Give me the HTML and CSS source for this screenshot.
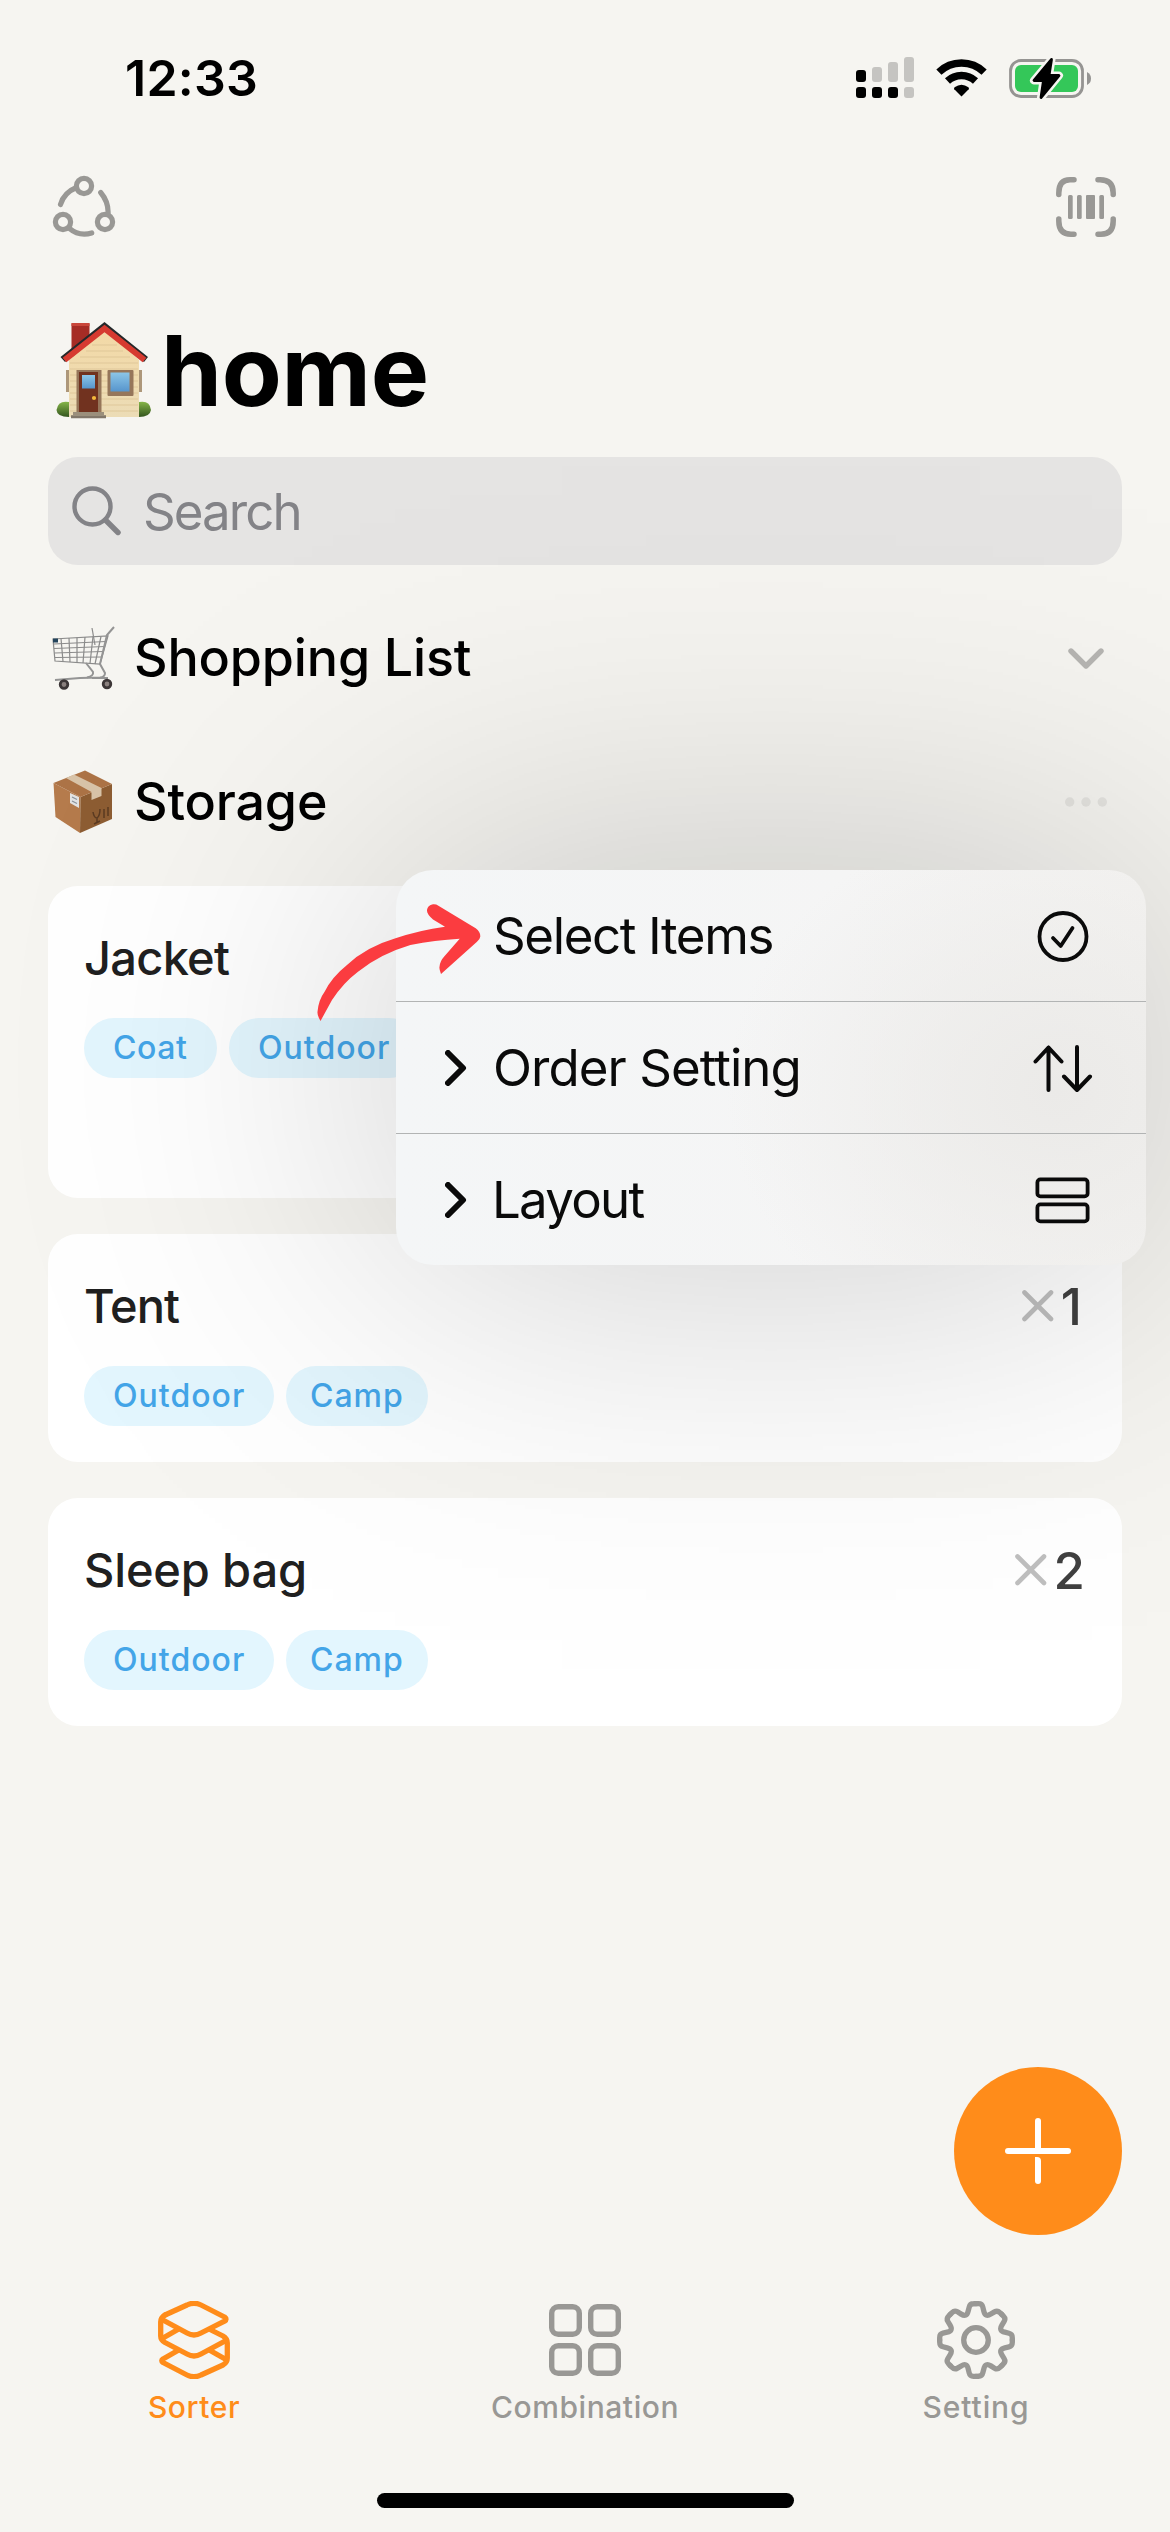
FILE: index.html
```html
<!DOCTYPE html>
<html lang="en">
<head>
<meta charset="utf-8">
<title>home</title>
<link rel="stylesheet" href="styles.css">
</head>
<body>
<div class="screen">
  <header class="status">
    <span class="time">12:33</span>
    <div class="status-icons">
      <svg width="58" height="42" viewBox="0 0 58 42">
        <g fill="#000"><rect y="13" width="10" height="12" rx="3"/><rect y="30" width="10" height="11" rx="3"/><rect x="16" y="30" width="10" height="11" rx="3"/><rect x="32" y="30" width="10" height="11" rx="3"/></g>
        <g fill="#c5c4c1"><rect x="16" y="10" width="10" height="15" rx="3"/><rect x="32" y="5" width="10" height="20" rx="3"/><rect x="48" width="10" height="25" rx="3"/><rect x="48" y="30" width="10" height="11" rx="3"/></g>
      </svg>
      <svg class="wifi" width="52" height="38" viewBox="0 0 52 38">
        <g fill="none" stroke="#000" stroke-width="7.400"><path d="M2.900 13.100A32.500 32.500 0 0 1 48.100 13.100"/><path d="M11.500 22A20.500 20.500 0 0 1 39.500 22"/></g>
        <path d="M25.500 37.500L18.300 30.300Q17.500 29.200 18.600 28.300Q25.500 23.200 32.400 28.300Q33.500 29.200 32.700 30.300Z"/>
      </svg>
      <svg class="battery" width="84" height="44" viewBox="0 0 84 44">
        <rect x="1.500" y="4.500" width="72" height="36" rx="10.500" fill="none" stroke="#959492" stroke-width="2.800"/>
        <rect x="6" y="9" width="63" height="27" rx="6" fill="#34c759"/>
        <path d="M78 16Q82 18 82 22.500T78 29Z" fill="#959492"/>
        <path d="M42.500 3.500L25 24.500H34.500L32 41.500L50 19.500H40Z" fill="#f6f5f1" stroke="#f6f5f1" stroke-width="8" stroke-linejoin="round"/>
        <path d="M42.500 3.500L25 24.500H34.500L32 41.500L50 19.500H40Z" stroke="#000" stroke-width="2.800" stroke-linejoin="round"/>
      </svg>
    </div>
  </header>

  <nav class="toolbar">
    <svg width="64" height="64" viewBox="0 0 64 64" fill="none" stroke="#999895" stroke-width="5.200" stroke-linecap="round">
      <circle cx="32" cy="11" r="7.600"/><circle cx="11" cy="47" r="7.600"/><circle cx="53" cy="47" r="7.600"/>
      <path d="M24.500 12.500Q12 17.500 8.500 29.500M48.700 17.500Q57 27.500 56 39.500M17.500 53.500Q27 61.500 39.700 58"/>
    </svg>
    <svg width="60" height="60" viewBox="0 0 60 60" fill="#999895">
      <path d="M2.800 17.500V16Q2.800 2.800 14 2.800H18M42 2.800H44Q57.200 2.800 57.200 16V17.500M57.200 42V44Q57.200 57.200 45 57.200H42M18 57.200H15Q2.800 57.200 2.800 44V42" fill="none" stroke="#999895" stroke-width="5.500" stroke-linecap="round"/>
      <rect x="12" y="18" width="4.700" height="24" rx="1.500"/><rect x="21" y="18" width="4.700" height="24" rx="1.500"/><rect x="30" y="18" width="9" height="24" rx="1"/><rect x="43.300" y="18" width="4.700" height="24" rx="1.500"/>
    </svg>
  </nav>

  <main class="content">
    <h1 class="title">
      <svg width="104" height="104" viewBox="12 8 104 104">
        <defs>
          <linearGradient id="wall" x1="0" y1="0" x2="0" y2="1"><stop offset="0" stop-color="#f3d9a6"/><stop offset="1" stop-color="#ecdcb6"/></linearGradient>
          <linearGradient id="glass" x1="0" y1="0" x2="0" y2="1"><stop offset="0" stop-color="#8cc6e8"/><stop offset="1" stop-color="#5795cc"/></linearGradient>
          <linearGradient id="bush" x1="0" y1="0" x2="0" y2="1"><stop offset="0" stop-color="#86b649"/><stop offset="1" stop-color="#33551e"/></linearGradient>
        </defs>
        <rect x="31.500" y="13" width="18" height="34" rx="1" fill="#a62c25"/><path d="M31.500 14.500h18" stroke="#c9463a" stroke-width="3"/>
        <path d="M27.500 60v22M100.500 60v22" stroke="#ad977a" stroke-width="3"/>
        <path d="M29 50L64.500 19L99 50V107H29Z" fill="url(#wall)"/>
        <path d="M52 35H77M46 41H83M40 47H90M30 53H98M30 59H98M30 65H98M30 71H98M30 77H98M30 83H98M30 89H98M30 95H98M30 101H98" stroke="#dcc394" stroke-width=".8"/>
        <path d="M20.500 47L64.500 12L108 47L104 52L64.500 20L25 52Z" fill="#25282a"/>
        <path d="M24.500 50L64.500 18.500L104.500 50" fill="none" stroke="#d63a30" stroke-width="6"/>
        <rect x="36.500" y="60" width="25" height="44" fill="#96765a"/><rect x="39" y="62" width="19" height="41" fill="#71321f"/><rect x="42" y="65" width="13" height="13.500" fill="url(#glass)"/><circle cx="54" cy="88" r="2.100" fill="#f5b93b"/>
        <rect x="67.500" y="60" width="26" height="26" rx="1" fill="#96765a"/><rect x="70.500" y="62.500" width="19" height="19" fill="url(#glass)"/>
        <path d="M29 92Q18 90 16.500 100Q17 107 29 107Z" fill="url(#bush)"/><path d="M99 92Q110 90 111 100Q110 107 99 107Z" fill="url(#bush)"/>
        <path d="M33 103.500H64" stroke="#9b8f7c" stroke-width="3"/><path d="M31 106.800H66" stroke="#81776a" stroke-width="3"/>
      </svg>
      <span>home</span>
    </h1>

    <div class="search">
      <svg width="50" height="50" viewBox="0 0 50 50" fill="none" stroke="#838387"><circle cx="20.500" cy="20.500" r="18" stroke-width="4.400"/><path d="M33.500 34L46 46.500" stroke-width="5.400" stroke-linecap="round"/></svg>
      <span>Search</span>
    </div>

    <section class="section">
      <svg class="emoji" width="64" height="64" viewBox="0 0 64 64" fill="none">
        <g stroke="#8b8b8b" stroke-width="1.200">
          <path d="M1 13L56 10L48 38L3 35Z"/><path d="M2 18L54 15.500M2 22.500L53 20.500M2.500 27L51.500 25.500M3 31.500L50 31"/>
          <path d="M9 12.500L11 35.500M17 12L18 36M25 11.500V36.500M33 11L31 37M41 10.500L38 37.500M49 10.500L43 38"/>
          <path d="M40 2L43 19"/>
        </g>
        <g stroke="#949494" stroke-width="2"><path d="M62 1L55 9L48 38L53 47Q53 51 48 51.500L28 52L3 54"/><path d="M34 37L41 46Q42 50 35 51.500M56 52H40"/></g>
        <path d="M1 14.500h5" stroke="#24445c" stroke-width="4"/>
        <g fill="#8a807e" stroke="#3c3637" stroke-width="2.800"><circle cx="12" cy="58.500" r="3.800"/><circle cx="55" cy="58" r="3.800"/></g>
      </svg>
      <h2>Shopping List</h2>
      <svg class="action" width="36" height="22" viewBox="0 0 36 22" fill="none" stroke="#b6b5b2" stroke-width="5.400" stroke-linecap="round" stroke-linejoin="round"><path d="M3 3L18 18L33 3"/></svg>
    </section>

    <section class="section">
      <svg class="emoji" width="64" height="64" viewBox="0 0 64 64">
        <path d="M1.500 13L28.500 27L28 63L3.500 47Z" fill="#b57b4c"/><path d="M28.500 27L60 14V49L28 63Z" fill="#8d5d33"/><path d="M1.500 13L33 .500L60 14L28.500 27Z" fill="#ac7346"/>
        <path d="M14 8L22 4.500L49.500 18V26L39.500 30V22Z" fill="#d8c3a8"/>
        <path d="M18 23L27 27V38L18 33Z" fill="#e3e3e3"/><path d="M20 27L25 29.500M20 31L25 33.500" stroke="#8a929b" stroke-width="1.200"/>
        <path d="M41 42Q42 48 45 48Q48 46 48 39M45 48V53M42 54L48 51M52 39V48M56 37V46" stroke="#5b3b22" stroke-width="1.500" fill="none"/>
      </svg>
      <h2>Storage</h2>
      <svg class="action dots" width="42" height="10" viewBox="0 0 42 10" fill="#e5e4e0"><circle cx="4.700" cy="5" r="4.700"/><circle cx="21" cy="5" r="4.700"/><circle cx="37.300" cy="5" r="4.700"/></svg>
    </section>

    <div class="cards">
      <article class="card tall">
        <div class="card-head"><h3 class="jacket">Jacket</h3></div>
        <div class="tags"><span class="tag coat">Coat</span><span class="tag outdoor">Outdoor</span></div>
      </article>
      <article class="card">
        <div class="card-head"><h3 class="tent">Tent</h3>
          <div class="qty one"><svg width="32" height="32" viewBox="0 0 32 32" stroke="#bfbfbf" stroke-width="4.600" stroke-linecap="round"><path d="M2.500 2.500L29 29M29 2.500L2.500 29"/></svg><span>1</span></div></div>
        <div class="tags"><span class="tag outdoor">Outdoor</span><span class="tag camp">Camp</span></div>
      </article>
      <article class="card">
        <div class="card-head"><h3>Sleep bag</h3>
          <div class="qty"><svg width="32" height="32" viewBox="0 0 32 32" stroke="#bfbfbf" stroke-width="4.600" stroke-linecap="round"><path d="M2.500 2.500L29 29M29 2.500L2.500 29"/></svg><span>2</span></div></div>
        <div class="tags"><span class="tag outdoor">Outdoor</span><span class="tag camp">Camp</span></div>
      </article>
    </div>
  </main>

  <button class="fab" aria-label="Add">
    <svg width="66" height="66" viewBox="0 0 66 66" fill="#fff"><rect y="30" width="66" height="6" rx="3"/><path d="M30 32V3Q30 0 33 0T36 3V32Z"/><path d="M30 39H32Q36 39 36 43V63Q36 66 33 66T30 63Z"/></svg>
  </button>

  <nav class="tabs">
    <a class="tab active">
      <svg width="78" height="78" viewBox="-3 0 78 78" fill="none" stroke="#ff8c1a" stroke-width="5.300" stroke-linecap="round" stroke-linejoin="round">
        <path d="M7 14L29 4Q36 .500 43 4L66.500 16Q69.500 18.200 66.500 20.200L43 32Q36 36 29 32L4 18.500"/>
        <path d="M7 14Q2.700 16.500 2.700 21V35Q2.700 39 7 41.500L29 53Q36 57 43 53L68 39.500"/>
        <path d="M19 29L5 37M53 29L65 35Q69.300 37.500 69.300 42V57Q69.300 61.500 65 64L43 74Q36 77.500 29 74L5 61.500Q2.500 59.800 5 58L19 50M53 50L68 58.500"/>
      </svg>
      <span>Sorter</span>
    </a>
    <a class="tab">
      <svg width="78" height="78" viewBox="-3 -3 78 78" fill="none" stroke="#999895" stroke-width="5.400">
        <rect x="2.700" y="2.700" width="27.600" height="27.600" rx="6.500"/><rect x="41.700" y="2.700" width="27.600" height="27.600" rx="6.500"/><rect x="2.700" y="41.700" width="27.600" height="27.600" rx="6.500"/><rect x="41.700" y="41.700" width="27.600" height="27.600" rx="6.500"/>
      </svg>
      <span class="combo">Combination</span>
    </a>
    <a class="tab">
      <svg width="78" height="78" viewBox="-39 -39 78 78" fill="none" stroke="#999895" stroke-width="5.300" stroke-linecap="round">
        <defs><path id="tooth" d="M0 -36.300H2.500Q6 -36.300 6.800 -33L7.800 -28.800Q9.300 -22.500 14.800 -25.900L18.500 -28.100Q21.400 -29.900 23.900 -27.400L25.700 -25.700"/></defs>
        <use href="#tooth"/><use href="#tooth" transform="rotate(45)"/><use href="#tooth" transform="rotate(90)"/><use href="#tooth" transform="rotate(135)"/><use href="#tooth" transform="rotate(180)"/><use href="#tooth" transform="rotate(225)"/><use href="#tooth" transform="rotate(270)"/><use href="#tooth" transform="rotate(315)"/>
        <circle r="12.300"/>
      </svg>
      <span class="setting">Setting</span>
    </a>
  </nav>
  <div class="home-bar"></div>

  <div class="menu-layer">
    <div class="menu-shadow"></div>
    <div class="menu">
      <div class="row"><span class="chev"></span><span class="label select">Select Items</span>
        <svg width="60" height="60" viewBox="0 0 60 60" fill="none" stroke="#0a0a0a" stroke-linecap="round" stroke-linejoin="round"><circle cx="30" cy="30.500" r="23.500" stroke-width="3.800"/><path d="M20 32L27.700 40L39.500 22" stroke-width="3.800"/></svg></div>
      <div class="row"><svg class="chev" width="22" height="36" viewBox="0 0 22 36" fill="none" stroke="#0a0a0a" stroke-width="6" stroke-linecap="round" stroke-linejoin="round"><path d="M3 3L18 18L3 33"/></svg><span class="label order">Order Setting</span>
        <svg width="60" height="60" viewBox="0 0 60 60" fill="none" stroke="#0a0a0a" stroke-width="4" stroke-linecap="round" stroke-linejoin="round"><path d="M15.500 52V9.500M2.500 23.500L15.500 9.500L28.500 23.500M44 9V51.500M31 38.500L44 52L57 38.500"/></svg></div>
      <div class="row"><svg class="chev" width="22" height="36" viewBox="0 0 22 36" fill="none" stroke="#0a0a0a" stroke-width="6" stroke-linecap="round" stroke-linejoin="round"><path d="M3 3L18 18L3 33"/></svg><span class="label layout">Layout</span>
        <svg width="60" height="60" viewBox="0 0 60 60" fill="none" stroke="#0a0a0a" stroke-width="3.800"><rect x="4.400" y="9.400" width="50.200" height="17" rx="3"/><rect x="4.400" y="34.400" width="50.200" height="17" rx="3"/></svg></div>
    </div>
  </div>

  <svg class="arrow" width="164" height="118" viewBox="317 904 164 118" fill="#fb3c40">
    <path d="M320.500 1021Q317 1015 317.500 1011.700Q318.500 1000 324.600 991.700Q332 977 347 965Q366 947 395.500 938.300Q420 930 445 926.700L433 919.500Q426.500 914 427 910Q427.500 905.500 433 904.300Q436 904 438.400 905.700L475.700 928.300Q480.500 932 480.300 936.500Q480 939.500 477 941.700L441 974Q439 969 439.500 966.700Q440 961 444 956.700L459.700 938.700Q435 940 410.400 945Q380 954 358 971.700Q343 983 332 1000Z"/>
  </svg>
</div>
</body>
</html>
```
FILE: styles.css
```css
* { box-sizing: border-box; margin: 0; padding: 0; }

body {
  font-family: Inter, "Liberation Sans", sans-serif;
  background: #f6f5f1;
  color: #000;
}

svg { display: block; flex: none; }

.screen {
  position: relative;
  display: flex;
  flex-direction: column;
  width: 1170px;
  height: 2532px;
  overflow: hidden;
}

/* Status bar */
.status {
  display: flex;
  justify-content: space-between;
  align-items: center;
  height: 156px;
  padding: 0 77px 0 125px;
}
.time { font-size: 50px; font-weight: 600; letter-spacing: .24px; }
.status-icons { display: flex; align-items: center; }
.wifi { margin-left: 22px; }
.battery { margin-left: 21px; }

.toolbar {
  display: flex;
  justify-content: space-between;
  align-items: center;
  height: 102px;
  padding: 0 54px 0 52px;
}

/* Main list */
.content { flex: 1; padding: 0 48px; }
.title {
  display: flex;
  align-items: center;
  height: 199px;
  padding: 26px 0 0 4px;
  font-size: 98px;
  font-weight: 700;
  letter-spacing: -.3px;
}
.title svg { margin-top: -2px; }
.title span { margin-left: 5px; }

.search {
  display: flex;
  align-items: center;
  gap: 21px;
  height: 108px;
  margin-bottom: 21px;
  padding-left: 24px;
  border-radius: 30px;
  background: #e5e4e3;
  color: #838387;
  font-size: 51px;
  letter-spacing: -1.92px;
}

.section { display: flex; align-items: center; height: 144px; }
.emoji { margin-left: 4px; }
.section h2 { margin: -2px 0 0 18px; font-size: 52px; font-weight: 500; letter-spacing: -.15px; }
.action { margin: 2px 18px 0 auto; }
.dots { margin-top: 0; margin-right: 15px; }

.cards { display: flex; flex-direction: column; gap: 36px; margin-top: 12px; }
.card { height: 228px; padding: 36px 38px 0 36px; border-radius: 30px; background: #fff; }
.card.tall { height: 312px; }
.card-head { display: flex; justify-content: space-between; align-items: center; height: 72px; }
.card-head h3 { margin-top: -2px; color: #202020; font-size: 47px; font-weight: 500; letter-spacing: -.15px; }
.card-head .jacket { letter-spacing: -.74px; }
.card-head .tent { letter-spacing: -.96px; }
.qty { display: flex; align-items: center; gap: 7px; margin-right: -1px; color: #404040; font-size: 51px; font-weight: 500; }
.qty.one { margin-right: 2px; }

.tags { display: flex; gap: 12px; margin-top: 24px; }
.tag {
  height: 60px;
  padding-left: 29px;
  border-radius: 30px;
  background: #e3f6fe;
  color: #43a5e8;
  font-size: 32px;
  font-weight: 500;
  line-height: 59px;
}
.coat { width: 133px; letter-spacing: .57px; }
.outdoor { width: 190px; letter-spacing: 1.03px; }
.camp { width: 142px; padding-left: 24px; letter-spacing: .98px; }

/* Floating button */
.fab {
  position: absolute;
  right: 48px;
  bottom: 297px;
  display: flex;
  align-items: center;
  justify-content: center;
  width: 168px;
  height: 168px;
  border: 0;
  border-radius: 50%;
  background: #ff8c1a;
}

/* Bottom tabs */
.tabs { display: grid; grid-template-columns: 388px 394px 388px; height: 192px; }
.tab { display: flex; flex-direction: column; align-items: center; color: #999895; }
.tab span { margin-top: 10px; font-size: 30px; font-weight: 500; line-height: 36px; letter-spacing: .57px; }
.tab .setting { letter-spacing: .9px; }
.tab.active { color: #ff8c1a; }
.home-bar { width: 417px; height: 15px; margin: 0 auto 24px 377px; border-radius: 8px; background: #000; }

/* Context menu */
.menu-layer { position: absolute; left: 396px; top: 870px; width: 750px; height: 395px; }

/* Wide soft shadow: horizontal and vertical falloffs multiplied together */
.menu-shadow {
  position: absolute;
  inset: -510px;
  background: rgba(0, 0, 0, .22);
  -webkit-mask-image: var(--fall-x), var(--fall-y);
  -webkit-mask-composite: source-in;
  mask-image: var(--fall-x), var(--fall-y);
  mask-composite: intersect;
  --fall-x: linear-gradient(90deg,
    transparent 0, rgba(0,0,0,.006) 85px, rgba(0,0,0,.012) 127.5px, rgba(0,0,0,.023) 170px,
    rgba(0,0,0,.04) 212.5px, rgba(0,0,0,.067) 255px, rgba(0,0,0,.106) 297.5px, rgba(0,0,0,.159) 340px,
    rgba(0,0,0,.227) 382.5px, rgba(0,0,0,.309) 425px, rgba(0,0,0,.401) 467.5px, rgba(0,0,0,.5) 510px,
    rgba(0,0,0,.599) 552.5px, rgba(0,0,0,.69) 595px, rgba(0,0,0,.773) 637.5px, rgba(0,0,0,.841) 680px,
    rgba(0,0,0,.894) 722.5px, rgba(0,0,0,.933) 765px, rgba(0,0,0,.965) 850px, rgba(0,0,0,.97) 885px,
    rgba(0,0,0,.965) 920px, rgba(0,0,0,.933) 1005px, rgba(0,0,0,.894) 1047.5px, rgba(0,0,0,.841) 1090px,
    rgba(0,0,0,.773) 1132.5px, rgba(0,0,0,.69) 1175px, rgba(0,0,0,.599) 1217.5px, rgba(0,0,0,.5) 1260px,
    rgba(0,0,0,.401) 1302.5px, rgba(0,0,0,.309) 1345px);
  --fall-y: linear-gradient(180deg,
    transparent 0, rgba(0,0,0,.006) 85px, rgba(0,0,0,.012) 127.5px, rgba(0,0,0,.023) 170px,
    rgba(0,0,0,.04) 212.5px, rgba(0,0,0,.067) 255px, rgba(0,0,0,.105) 297.5px, rgba(0,0,0,.158) 340px,
    rgba(0,0,0,.226) 382.5px, rgba(0,0,0,.306) 425px, rgba(0,0,0,.396) 467.5px, rgba(0,0,0,.49) 510px,
    rgba(0,0,0,.58) 552.5px, rgba(0,0,0,.658) 595px, rgba(0,0,0,.716) 637.5px, rgba(0,0,0,.748) 680px,
    rgba(0,0,0,.754) 707.5px, rgba(0,0,0,.748) 735px, rgba(0,0,0,.716) 777.5px, rgba(0,0,0,.658) 820px,
    rgba(0,0,0,.58) 862.5px, rgba(0,0,0,.49) 905px, rgba(0,0,0,.396) 947.5px, rgba(0,0,0,.306) 990px,
    rgba(0,0,0,.226) 1032.5px, rgba(0,0,0,.158) 1075px, rgba(0,0,0,.105) 1117.5px, rgba(0,0,0,.067) 1160px,
    rgba(0,0,0,.04) 1202.5px, rgba(0,0,0,.023) 1245px, rgba(0,0,0,.012) 1287.5px, rgba(0,0,0,.006) 1330px,
    transparent 1415px);
}

.menu {
  position: relative;
  border-radius: 37px;
  background:
    radial-gradient(330px 280px at 88% 56%, #ebeae8 0, rgba(242, 241, 240, 0) 100%),
    linear-gradient(90deg, #f4f6f7 0, #f5f5f5 60%, #f3f2f0 100%);
}
.row { display: flex; align-items: center; height: 131px; padding: 0 53px 0 49px; color: #0a0a0a; }
.row + .row { height: 132px; border-top: 1px solid #b2b4b4; }
.chev { width: 22px; }
.label { flex: 1; margin-left: 26px; font-size: 51px; }
.select { letter-spacing: -1.39px; }
.order { letter-spacing: -.95px; }
.layout { margin-left: 25px; letter-spacing: -1.73px; }

.arrow { position: absolute; left: 317px; top: 904px; }
```
